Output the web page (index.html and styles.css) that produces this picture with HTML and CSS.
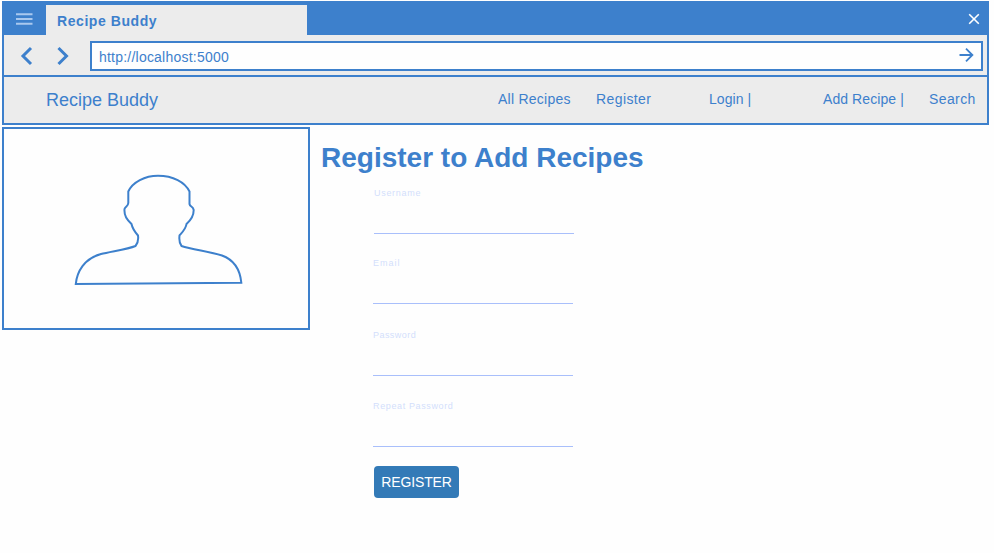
FILE: index.html
```html
<!DOCTYPE html>
<html lang="en">
<head>
<meta charset="utf-8">
<title>Recipe Buddy</title>
<link rel="stylesheet" href="styles.css">
</head>
<body>
<header class="window">
  <div class="titlebar">
    <svg class="menu" width="18" height="12" viewBox="0 0 18 12"><path d="M0 1.2H16.500M0 6H16.500M0 10.800H16.500"/></svg>
    <div class="tab">Recipe Buddy</div>
    <svg class="close" width="12" height="12" viewBox="0 0 12 12"><path d="M1.200 1.200L10.800 10.800M10.800 1.200L1.200 10.800"/></svg>
  </div>
  <div class="toolbar">
    <svg class="chevrons" width="50" height="20" viewBox="0 0 50 20"><path d="M11 2L3 10L11 18M38.500 2L46.500 10L38.500 18"/></svg>
    <div class="address">
      <span>http://localhost:5000</span>
      <svg width="16" height="16" viewBox="0 0 16 16"><path d="M1.500 8H14.500M8 1.600L14.400 8L8 14.400"/></svg>
    </div>
  </div>
  <nav class="nav">
    <a class="brand">Recipe Buddy</a>
    <a>All Recipes</a>
    <a class="wide">Register</a>
    <a class="tight">Login |</a>
    <a class="tight">Add Recipe |</a>
    <a class="wide">Search</a>
  </nav>
</header>
<main class="content">
  <div class="portrait">
    <svg width="200" height="140" viewBox="60 160 200 140"><path d="M75.800 283.900C77 272 84 258.500 101 254C110 251.500 127 249.500 135.500 246C138 243 138.500 239 138 235.500C134.500 231.500 132.500 229 131.500 224C127 219.500 124 216 124.500 209C125.500 206 128 206.500 128.300 203V191.500C132.500 182 145 175.700 158 175.700C173 175.700 185 182 189.500 191.500V204C190 207 193 206 193.700 210C193.700 216 191 220 186.500 224C186 228.500 183 231.500 179.500 235.500C179 240 179 243 181.500 246C192 249.500 209 251.500 222 255.500C233 259.500 240 269 241.300 282.700Z"/></svg>
  </div>
  <section class="register">
    <h1>Register to Add Recipes</h1>
    <form>
      <label class="username">Username</label>
      <label class="email">Email</label>
      <label class="password">Password</label>
      <label class="repeat">Repeat Password</label>
      <button type="button">REGISTER</button>
    </form>
  </section>
</main>
</body>
</html>
```
FILE: styles.css
```css
* { box-sizing: border-box; }
body {
  margin: 0;
  padding: 1px 5px 0 2px;
  background: #fefefe;
  color: #3d80cc;
  font: 14px/16px "Liberation Sans", Arial, sans-serif;
}
svg { display: block; flex: none; fill: none; stroke: #3d80cc; }
.window {
  height: 124px;
  border: 2px solid #3d80cc;
  background: #ececec;
}
.titlebar {
  display: flex;
  height: 32px;
  padding: 2px 7px 0 12px;
  background: #3d80cc;
}
.menu { margin-top: 8px; stroke: #a9c8ee; stroke-width: 2; }
.tab {
  width: 261px;
  height: 30px;
  margin-left: 12px;
  padding: 8px 11px;
  background: #ececec;
  font-weight: bold;
  letter-spacing: 0.57px;
}
.close { margin: 8px 0 0 auto; stroke: #fff; stroke-width: 1.6; }
.toolbar {
  display: flex;
  height: 42px;
  padding: 6px 4px 4px 16px;
  border-bottom: 2px solid #3d80cc;
}
.chevrons { margin: 5px 20px 0 0; stroke-width: 3; }
.address {
  display: flex;
  flex: 1;
  justify-content: space-between;
  height: 30px;
  padding: 6px 7px;
  border: 2px solid #3d80cc;
  background: #fefefe;
  letter-spacing: 0.22px;
}
.address svg { margin-top: -2px; stroke-width: 1.8; }
.nav {
  display: grid;
  grid-template-columns: 452px 98px 113px 114px 106px 1fr;
  padding: 14px 0 0 42px;
  letter-spacing: 0.25px;
  white-space: nowrap;
}
.wide { letter-spacing: 0.4px; }
.tight { letter-spacing: 0.08px; }
.brand { font-size: 18px; line-height: 18px; letter-spacing: 0; }
.content { display: flex; margin-top: 2px; }
.portrait {
  width: 308px;
  height: 203px;
  padding: 31px 56px;
  border: 2px solid #3d80cc;
}
.portrait svg { stroke-width: 2; }
.register { padding: 15px 0 0 11px; }
h1 { margin: 0; font-size: 28px; line-height: 32px; white-space: nowrap; }
form { display: flex; flex-direction: column; padding: 13px 0 0 52px; }
label {
  width: 200px;
  height: 47px;
  border-bottom: 1px solid #a9bffb;
  color: #d3dffc;
  font-size: 9px;
  line-height: 12px;
  letter-spacing: 0.7px;
}
.username { margin-left: 1px; }
.email { margin-top: 23px; letter-spacing: 1px; }
.password { margin-top: 25px; letter-spacing: 0.45px; }
.repeat { margin-top: 24px; letter-spacing: 0.63px; }
button {
  width: 85px;
  height: 32px;
  margin: 19px 0 0 1px;
  padding: 0;
  border: 0;
  border-radius: 4px;
  background: #337ab7;
  color: #fff;
  font: 14px/32px "Liberation Sans", Arial, sans-serif;
  letter-spacing: -0.15px;
}
```
